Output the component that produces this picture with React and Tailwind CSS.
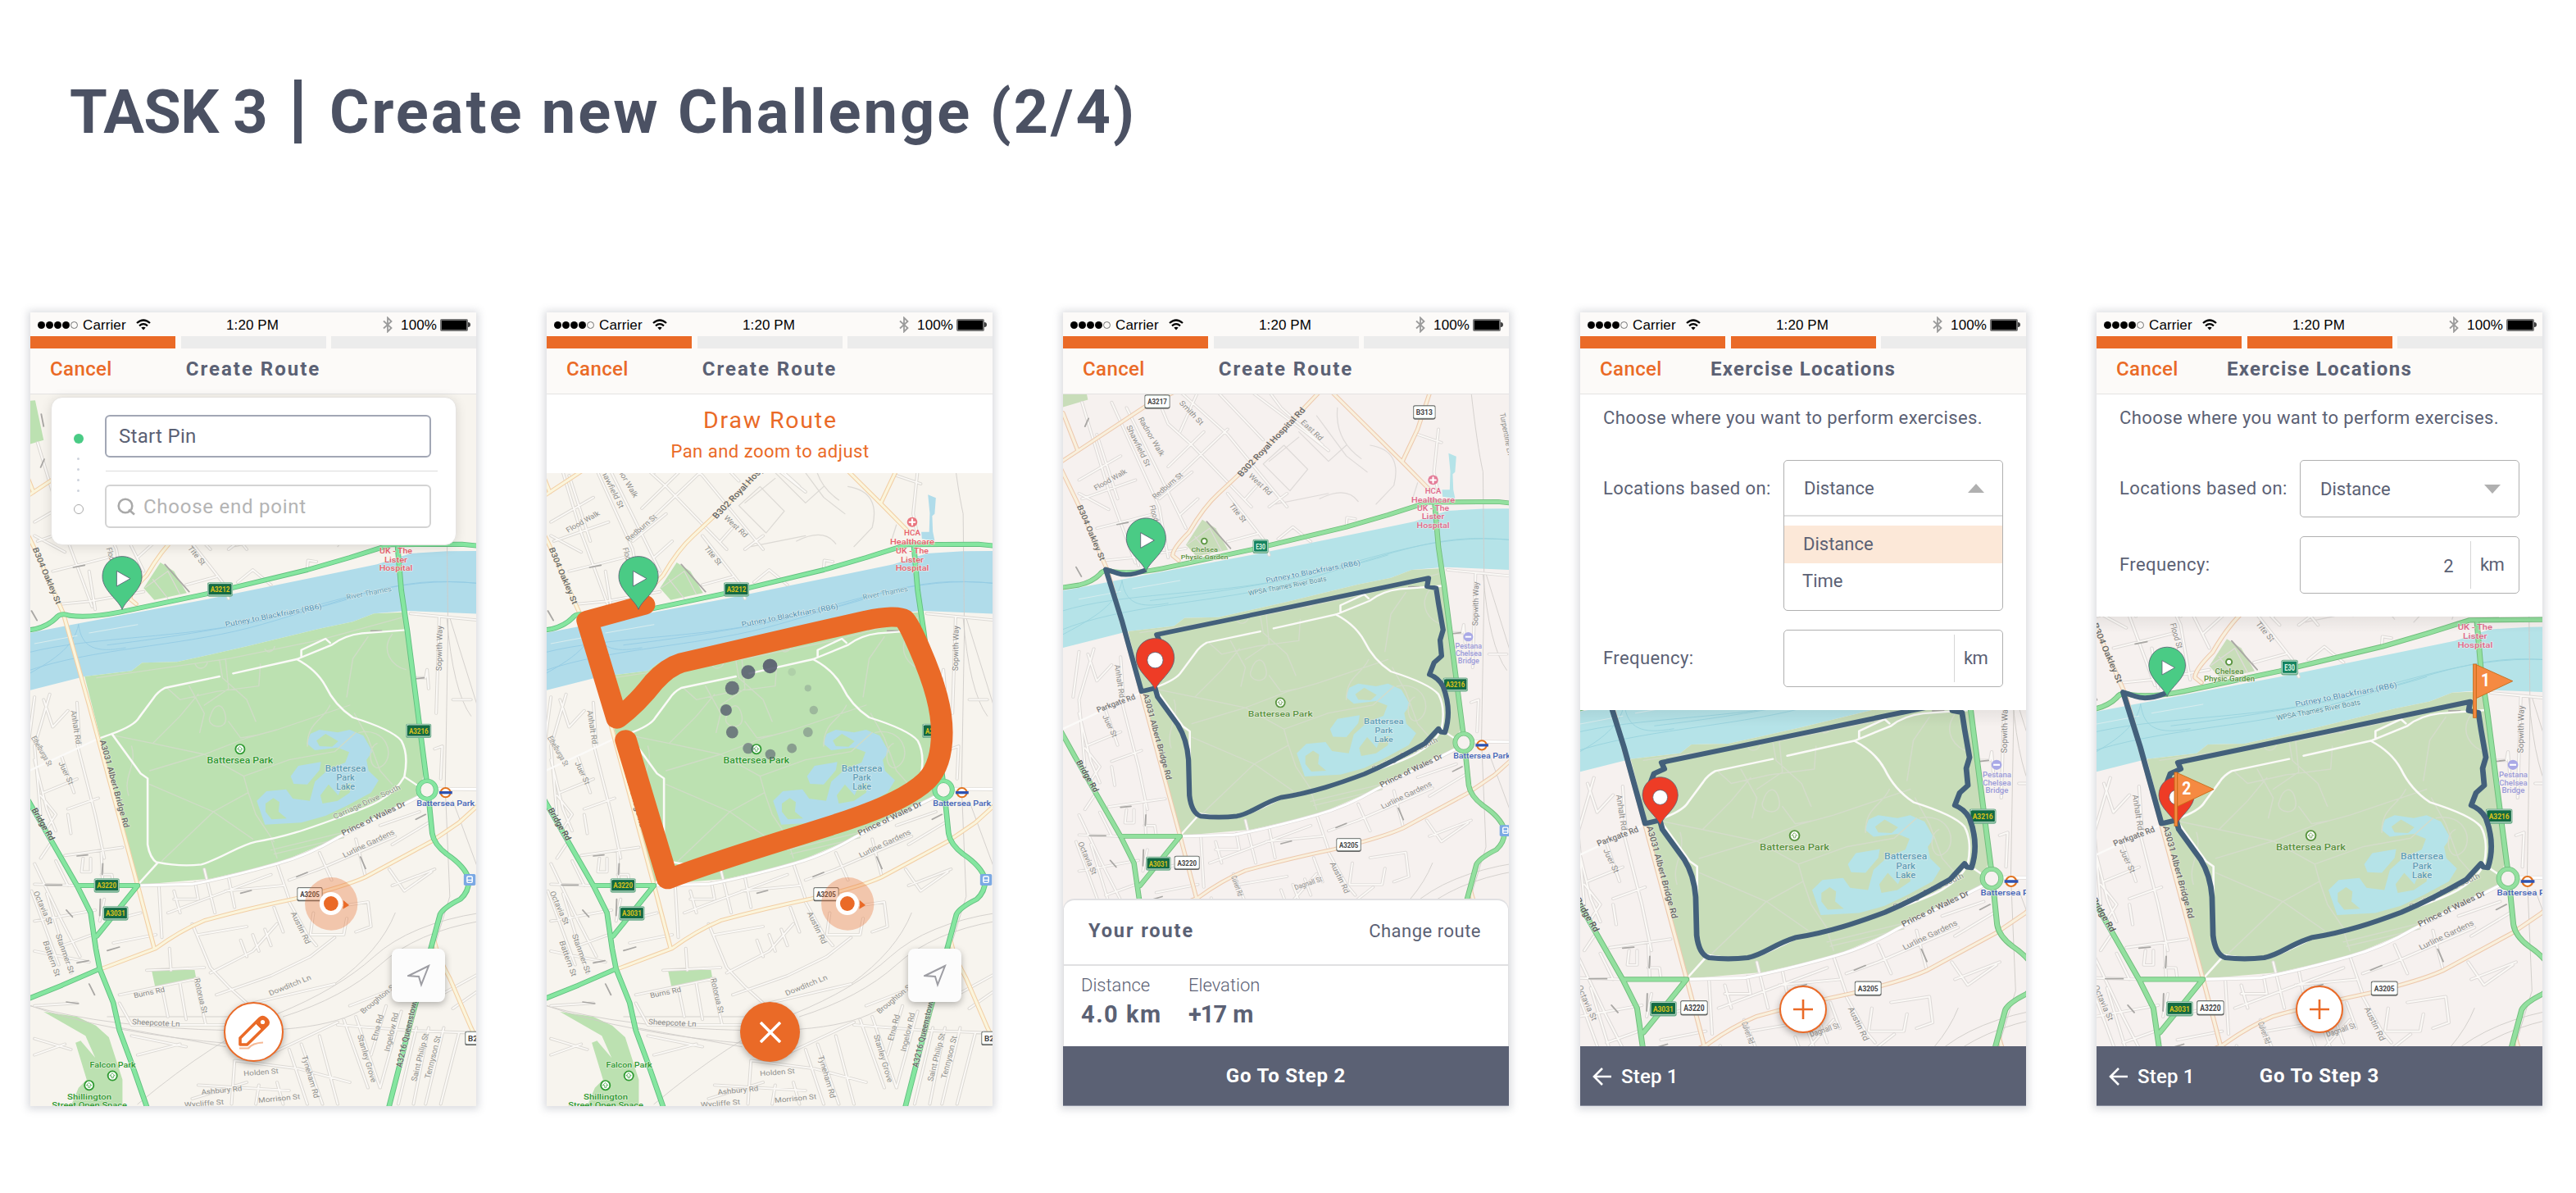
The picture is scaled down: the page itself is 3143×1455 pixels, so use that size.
import React from "react";

/* ---------- Map data ---------- */

const THEMES = {
  warm: { land: "#f7f4ee", water: "#b0dcea", wave: "#93cbe4", park: "#bce1b1", trail: "#cfdcc6", green: "#85e6a0", greenEdge: "#62bf7f", yellow: "#fbf5dc", yellowEdge: "#f2cfa6", casing: "#dcd9d4", parkText: "#2f9a32", red: "#e8606c" },
  rose: { land: "#f6f1ef", water: "#b5e3e8", wave: "#98d3dd", park: "#c8ddb9", trail: "#d4dcca", green: "#93e09f", greenEdge: "#71bd7c", yellow: "#f9f0dd", yellowEdge: "#edc9ae", casing: "#dedad8", parkText: "#5a9440", red: "#e0688a" },
};

const RIVER = "M0 1244 L46 1235 L210 1200 L640 1110 L1000 1028 L1190 985 L1300 945 L1420 937 L1530 936 L1530 1166 L1290 1155 L1180 1165 L1110 1195 L1000 1220 L760 1285 L620 1320 L530 1342 L415 1345 L380 1375 L225 1395 L0 1458 Z";
const PARK = "M225 1395 L380 1375 L415 1345 L530 1342 L620 1320 L760 1285 L1000 1220 L1110 1195 L1180 1165 L1278 1160 L1345 1750 L1325 1836 L1060 1985 L860 2080 L640 2135 L400 2158 Z";
const GARDENS = ["M475 978 L520 1010 L562 1090 L455 1115 L420 1072 Z", "M0 390 L62 385 L90 530 L0 560 Z", "M446 2469 L588 2469 L594 2506 L458 2532 Z", "M90 2622 L200 2640 L262 2672 L305 2715 L350 2870 L350 2967 L180 2967 L205 2900 L232 2870 L195 2735 L212 2728 L260 2790 L228 2710 Z"];
const LAKE = "M958 1640 L970 1605 L1000 1590 L1060 1600 L1100 1590 L1145 1612 L1175 1670 L1155 1700 L1162 1740 L1195 1775 L1170 1820 L1090 1868 L1020 1905 L940 1930 L820 1937 L793 1850 L825 1815 L890 1808 L912 1842 L968 1850 L985 1780 L1030 1735 L1085 1710 L1098 1672 L1060 1655 L985 1665 Z M905 1760 L930 1722 L1005 1708 L1000 1738 L960 1790 L915 1788 Z";
const ISLANDS = "M990 1630 L1020 1605 L1062 1632 L1042 1652 L1000 1650 Z M822 1860 L848 1840 L868 1855 L865 1890 L892 1915 L842 1918 L822 1890 Z M1003 1830 L1030 1790 L1062 1830 L1075 1795 L1103 1785 L1100 1820 L1060 1850 L1010 1860 Z";

const WAVES = "M0 1320 C200 1250 500 1260 760 1200 S1250 1020 1530 1055 M0 1390 C200 1300 480 1290 720 1230 S1200 1040 1420 1048 S1500 1070 1530 1095 M205 1205 C215 1290 260 1310 360 1290 M205 1205 C190 1290 120 1340 0 1410 M300 1280 C600 1240 900 1180 1100 1110";
const TRAILS = "M265 1400 L700 1330 L1000 1262 L1270 1180 M570 1430 L620 1530 L605 1600 M590 1350 C600 1375 625 1365 630 1345 M820 1295 C830 1315 850 1300 852 1285 M670 1335 L680 1400 L760 1480 L790 1560 M690 1330 L700 1440 L620 1500 M500 1440 L540 1480 L660 1450 L800 1430 L805 1350 M318 1610 L450 1640 L540 1540 L600 1460 M450 1640 L620 1680 L760 1620 L860 1590 L1100 1500 M620 1680 L440 1740 M620 1680 L750 1760 L765 1820 L790 1900 L850 2000 M765 1820 L650 1890 L480 2070 M650 1890 L440 1790 M650 1890 L780 1990 M750 1760 L900 1700 L1050 1670 L1120 1600 M960 1650 C960 1560 1010 1560 1035 1500 M1115 1530 L1160 1620 L1200 1740 L1240 1790 M1130 1600 C1220 1580 1250 1680 1210 1720 S1150 1660 1190 1640 M1160 1250 L1110 1330 L1090 1470 M1240 1240 C1200 1300 1240 1360 1285 1370 M640 1540 C620 1580 700 1600 690 1540 S650 1500 640 1540 M700 1560 L740 1620 L790 1610 M370 1830 C350 1760 400 1720 380 1650 M840 2030 L1100 1960 L1290 1850 M850 2045 L1080 1985 M860 2060 L840 1990 M1090 1890 L1240 1820";
const DRIVES = "M670 1395 L490 1437 Q465 1452 452 1475 L405 1545 Q390 1575 315 1605 L265 1625 L0 1762 M315 1605 L410 1750 L433 1768 L433 2010 Q440 2060 465 2078 L400 2158 M465 2075 Q540 2092 610 2083 C680 2060 730 2015 790 2000 C900 1980 980 1945 1080 1905 C1170 1870 1240 1840 1280 1762 Q1295 1680 1270 1630 Q1240 1590 1110 1545 Q1050 1500 1020 1430 Q990 1370 925 1332 M715 1384 L925 1332 L1040 1280 Q1080 1245 1140 1237 L1285 1225 M940 1325 L940 1298 L1020 1257 L1035 1272 M1280 1762 L1325 1795";
const BOULEVARD = "M1325 1836 L1060 1985 Q960 2050 860 2080 Q700 2130 580 2155 L400 2160 M1380 1806 L1530 1808";
const GREEN = "M0 1232 L60 1222 Q105 1210 130 1182 Q145 1160 175 1172 Q240 1182 340 1160 L640 1090 L960 1005 L1100 960 L1200 925 L1235 913 L1470 911 L1530 918 M1258 925 L1270 1080 L1290 1230 L1355 1790 M1360 1840 L1372 1970 Q1378 2010 1420 2045 Q1480 2090 1492 2135 Q1495 2180 1465 2210 Q1410 2240 1398 2265 L1370 2380 L1310 2620 L1228 2975 M0 1770 L46 1862 L200 2160 L245 2260 L262 2390 L275 2465 L320 2590 L340 2690 L380 2810 L432 2975 M200 2160 L400 2160 L265 2345 M275 2465 L150 2525 L0 2592";
const YELLOW = "M0 790 L70 950 L155 1165 L240 1500 L400 2158 L455 2390 M0 762 L56 721 L286 553 L420 480 M6 579 L56 721 M395 1130 L375 1112 Q375 1085 430 1025 Q480 930 530 880 L660 745 L870 500 M910 500 L1148 762 L1235 860 M1242 500 L1200 640 L1148 762 M285 2463 L460 2390 Q540 2325 620 2288 Q760 2245 920 2208 Q1080 2165 1150 2130 L1370 1998 L1460 1930 L1530 1860 M1378 2360 Q1390 2420 1430 2500 L1500 2680 L1530 2750";

const STREETS = "M70 540 L160 870 L250 1140 M120 660 L190 900 M170 540 L330 930 L360 1120 M220 560 L420 1010 M330 540 L360 620 L440 700 L640 930 M400 500 L560 660 L760 930 M500 470 L680 680 M60 830 L200 740 M70 900 L250 830 M120 1010 L230 980 L300 960 M150 1130 L240 1120 L420 1085 M360 780 L480 650 M380 830 L560 640 M330 900 L440 800 M460 500 L400 650 M560 880 L680 1050 L700 1110 M620 900 L660 850 M700 930 L760 880 M730 1050 L780 1005 L840 1060 M560 1060 L660 1030 M460 900 L400 960 M240 1010 L260 1150 M640 500 L820 650 L900 720 M700 500 L740 560 L880 700 M1270 640 L1255 800 L1268 870 M1200 660 L1280 690 M160 940 L60 880 M960 1000 L962 970 L990 975 M1300 1165 L1530 1190 M1395 1180 L1385 1530 M1310 1400 L1350 1400 L1355 1370 L1360 1440 M1440 1480 L1500 1480 M60 1470 L40 1640 M110 1460 L60 1650 L80 1900 M170 1520 L120 1580 L90 1480 M200 1490 L210 1650 M60 1700 L100 1880 L130 1960 M150 1690 L190 1820 M200 1640 L260 1900 L290 2060 M90 1820 L200 1770 M80 1830 L130 1900 L95 1960 M170 1880 L270 1840 M170 1900 L180 1970 M110 2010 L80 2060 M160 2050 L350 2020 M220 2060 L215 2110 L245 2110 L245 2060 M280 2040 L285 2160 M60 2155 L200 2160 M170 2160 L130 2070 M280 2120 L315 2120 L320 2160 M290 2210 L275 2290 M60 2080 L150 2290 L210 2420 M50 2180 L140 2450 M100 2190 L180 2480 M60 2290 L260 2250 M150 2380 L250 2340 M60 2400 L240 2440 M320 2370 L460 2340 M340 2280 L410 2260 M520 2180 L540 2260 M470 2160 L480 2350 M590 2150 L600 2210 L520 2210 M620 2100 L655 2260 M700 2130 L720 2240 M860 2080 L900 2210 M500 2260 L840 2120 M690 2180 L880 2160 M900 2140 L1000 2100 L1250 1980 M1000 2040 L1040 2140 M1120 1990 L1150 2120 M1200 1940 L1330 1890 M1240 2010 L1360 1930 M1380 2100 L1240 2160 M1230 2100 L1280 2180 L1370 2110 M1040 2240 L1160 2220 L1170 2310 L1120 2330 M980 2260 L970 2340 L1080 2340 L1090 2280 M900 2220 L960 2340 L990 2380 M850 2240 L880 2330 M580 2300 L640 2460 L700 2530 L760 2590 M640 2480 L780 2400 L860 2300 M740 2360 L760 2420 M780 2340 L800 2400 M820 2320 L840 2380 M600 2340 L760 2310 M430 2470 L620 2460 M505 2390 L510 2470 M340 2560 L600 2500 M480 2530 L500 2640 M540 2520 L560 2650 M590 2500 L625 2670 M380 2670 L740 2670 M340 2590 L380 2670 M380 2710 L560 2750 M400 2780 L540 2740 M660 2560 L840 2490 L970 2420 L1050 2350 M780 2590 L1050 2520 M1100 2600 L1240 2540 M1060 2670 L1290 2690 L1520 2700 M1080 2650 L1160 2900 M1120 2640 L1200 2900 M1220 2600 L1170 2780 M1270 2620 L1200 2900 M1320 2680 L1260 2960 M1360 2680 L1310 2960 M1410 2680 L1350 2960 M1460 2700 L1400 2960 M830 2780 L1060 2660 M900 2760 L960 2960 M940 2740 L1010 2960 M1000 2710 L1060 2960 M720 2800 L930 2830 L1100 2880 M720 2800 L710 2960 M600 2890 L900 2910 M580 2940 L760 2880 M800 2890 L790 2960 M860 2880 L880 2960 M1380 1660 L1405 1650 L1400 1770 M1400 2560 L1530 2480 M1440 2610 L1530 2540 M60 2720 L180 2760 M60 2780 L160 2740 M60 2600 L200 2590";
const LANES = "M750 700 L830 790 L770 870 L680 770 Z M800 650 L900 760 L960 700 M700 760 L800 670 M860 590 L960 740 L1030 800 M930 560 Q920 680 1010 750 M1040 700 Q1150 720 1120 850 L1060 920 M870 900 Q960 850 1000 910 M720 920 L900 880 M1200 840 L1180 910 M425 1070 L500 1010 L540 1095 M450 1040 L500 1110";
const RAILS = "M1380 500 Q1400 700 1420 800 L1424 1230 L1415 1800 L1430 2200 L1320 2600 M1420 1180 Q1440 1450 1500 1540 M1430 1180 L1520 1500 M1440 1850 L1530 2120 M1530 2260 Q1300 2300 1180 2420 T860 2630 T400 2960 M1530 2290 Q1320 2330 1200 2450 T880 2640 M1250 2260 Q1200 2400 1050 2520 M46 2600 Q300 2680 700 2690 T1200 2560 M46 2600 Q300 2700 720 2740 M340 2680 L690 2750 M300 2640 L700 2640";
const ARROWS = "M90 480 L82 435 M80 630 L92 600 M95 2158 L150 2158 M285 2080 L283 2120 M235 2048 L200 2052 M275 2270 L277 2210 M165 2250 L185 2275 M300 2398 L340 2385 M200 2443 L238 2435 M240 2520 L258 2560 M205 2592 L165 2586 M740 2188 L775 2178 M960 2112 L925 2128 M1135 2055 L1152 2098 M1350 1900 L1318 1918 M1170 1228 L1205 1228 M490 985 L570 1085 M225 988 L188 996 M50 1155 L68 1190 M1310 1404 L1345 1400";

/* Each label: text, x, y, angle, size, colour, length, weight */
const LABELS = [
  ["Battersea Park", 738, 1713, 0, 30, "park", 218, 500],
  ["Battersea", 1086, 1742, 0, 30, "#5f9fb8", 134, 500],
  ["Park", 1086, 1776, 0, 30, "#5f9fb8", 60, 500],
  ["Lake", 1086, 1809, 0, 30, "#5f9fb8", 62, 500],
  ["Battersea Park", 1416, 1868, 0, 28, "#4465b8", 192, 500],
  ["A3031  Albert Bridge Rd", 315, 1790, 76, 27, "#6b6b68", 330, 500],
  ["Prince of Wales Dr", 1182, 1922, -28, 27, "#6f6f6c", 235, 500],
  ["Carriage Drive South", 1160, 1862, -27, 26, "#8a9486", 245, 400],
  ["Lurline Gardens", 1166, 2014, -28, 26, "#8f8f8c", 190, 400],
  ["B304  Oakley St", 92, 1030, 69, 27, "#6b6b68", 220, 500],
  ["Sopwith Way", 1404, 1292, -89, 26, "#888", 165, 400],
  ["Putney to Blackfriars (RB6)", 850, 1180, -12, 26, "#4f93b5", 325, 400],
  ["Tite St", 588, 958, 53, 26, "#8f8f8c", 80, 400],
  ["Redburn St", 364, 858, -43, 26, "#8f8f8c", 130, 400],
  ["Flood Walk", 170, 836, -32, 26, "#8f8f8c", 125, 400],
  ["West Rd", 664, 852, 46, 26, "#8f8f8c", 100, 400],
  ["East Rd", 838, 650, 46, 26, "#8f8f8c", 95, 400],
  ["B302  Royal Hospital Rd", 715, 695, -49, 30, "#666", 330, 500],
  ["Shawfield St", 252, 706, 66, 26, "#8f8f8c", 165, 400],
  ["Radnor Walk", 296, 672, 62, 26, "#8f8f8c", 160, 400],
  ["Smith St", 432, 585, 49, 26, "#8f8f8c", 110, 400],
  ["Flood St", 308, 970, 75, 26, "#8f8f8c", 90, 400],
  ["Turpentine Ln", 1490, 660, 80, 26, "#8f8f8c", 160, 400],
  ["HCA", 1252, 880, 0, 26, "red", 54, 500],
  ["Healthcare", 1252, 913, 0, 26, "red", 146, 500],
  ["UK - The", 1252, 945, 0, 26, "red", 108, 500],
  ["Lister", 1252, 977, 0, 26, "red", 76, 500],
  ["Hospital", 1252, 1009, 0, 26, "red", 110, 500],
  ["Bridge Rd", 80, 1940, 62, 28, "#555", 130, 500],
  ["Anhalt Rd", 188, 1582, 82, 26, "#8f8f8c", 125, 400],
  ["Juer St", 156, 1752, 67, 26, "#8f8f8c", 88, 400],
  ["Austin Rd", 930, 2318, 66, 26, "#8f8f8c", 125, 400],
  ["Octavia St", 80, 2245, 68, 26, "#8f8f8c", 130, 400],
];
const WARM_LABELS = [
  ["Ethelburga St", 76, 1672, 62, 26, "#8f8f8c", 120, 400],
  ["River Thames", 1165, 1098, -12, 26, "#5f9fb8", 152, 400],
  ["Battern St", 108, 2430, 72, 26, "#8f8f8c", 135, 400],
  ["Stanmer St", 152, 2412, 72, 26, "#8f8f8c", 150, 400],
  ["Burns Rd", 440, 2560, -13, 26, "#888", 104, 400],
  ["Rotorua St", 600, 2565, 78, 26, "#8f8f8c", 130, 400],
  ["Dowditch Ln", 906, 2533, -24, 26, "#8f8f8c", 150, 400],
  ["Broughton St", 1200, 2580, -42, 26, "#8f8f8c", 150, 400],
  ["Sheepcote Ln", 460, 2672, 3, 28, "#888", 158, 400],
  ["Holden St", 808, 2852, -5, 26, "#8f8f8c", 115, 400],
  ["Ashbury Rd", 678, 2918, -6, 26, "#8f8f8c", 135, 400],
  ["Morrison St", 868, 2948, -6, 26, "#8f8f8c", 138, 400],
  ["Wycliffe St", 620, 2966, -5, 26, "#8f8f8c", 130, 400],
  ["Tyneham Rd", 962, 2862, 75, 26, "#8f8f8c", 160, 400],
  ["Stanley Grove", 1148, 2795, 75, 26, "#8f8f8c", 180, 400],
  ["Etna Rd", 1200, 2682, -76, 26, "#8f8f8c", 98, 400],
  ["Ingelow Rd", 1246, 2698, -78, 26, "#8f8f8c", 145, 400],
  ["A3216  Queenstown Rd", 1302, 2680, -78, 28, "#666", 300, 500],
  ["Saint Philip St", 1340, 2790, -77, 26, "#8f8f8c", 180, 400],
  ["Tennyson St", 1382, 2790, -77, 26, "#8f8f8c", 160, 400],
  ["Falcon Park", 318, 2826, 0, 29, "park", 152, 500],
  ["Shillington", 241, 2943, 0, 29, "park", 146, 500],
  ["Street Open Space", 241, 2974, 0, 29, "park", 248, 500],
];
const ROSE_LABELS = [
  ["Chelsea", 513, 940, 0, 24, "park", 88, 500],
  ["Physic Garden", 513, 966, 0, 24, "park", 156, 500],
  ["WPSA Thames River Boats", 788, 1072, -12, 25, "#4f93a5", 262, 400],
  ["Pestana", 1384, 1292, 0, 25, "#9a9ad8", 88, 500],
  ["Chelsea", 1384, 1319, 0, 25, "#9a9ad8", 86, 500],
  ["Bridge", 1384, 1346, 0, 25, "#9a9ad8", 70, 500],
  ["Parkgate Rd", 224, 1502, -22, 28, "#777", 135, 500],
  ["Dagnall St", 858, 2160, -20, 26, "#8f8f8c", 95, 400],
  ["Culvert Rd", 612, 2164, 72, 26, "#8f8f8c", 76, 400],
];

const WARM_BADGES = [["A3212", 672, 1077, "green"], ["A3220", 298, 2160, "green"]];
const ROSE_BADGES = [["E30", 698, 919, "teal"], ["A3220", 455, 2077, "white"], ["A3217", 357, 390, "white"], ["B313", 1238, 429, "white"]];
const BADGES = [["A3216", 1327, 1594, "green"], ["A3031", 327, 2262, "green"], ["A3205", 968, 2192, "white"]];

const ROUTE = "M320 1005 Q262 1032 225 1017 L187 1003 L240 1190 L305 1450 L350 1438 L358 1470 L425 1572 Q455 1625 460 1700 L463 1830 Q470 1895 500 1906 Q560 1914 620 1906 C670 1895 700 1860 765 1838 C870 1820 960 1785 1040 1752 Q1130 1710 1240 1640 L1285 1586 L1292 1598 L1306 1600 Q1330 1520 1300 1432 Q1285 1400 1255 1388 L1270 1345 L1295 1320 L1290 1262 L1300 1225 L1285 1130 L1277 1072 L1247 1066 L1252 1035 L800 1140 L355 1242 L364 1264 L332 1280 L322 1310";

/* ---------- Map pieces ---------- */

const within = (list, [top, bottom]) => list.filter((item) => item[2] >= top && item[2] <= bottom);

function MapLabel({ data, theme }) {
  const [text, x, y, angle, size, color, length, weight] = data;
  const fill = color === "park" ? theme.parkText : color === "red" ? theme.red : color;
  return (
    <text x={x} y={y} transform={`rotate(${angle} ${x} ${y})`} fontSize={size} fontWeight={weight} fill={fill} textAnchor="middle" textLength={length} lengthAdjust="spacingAndGlyphs" stroke={theme.land} strokeOpacity="0.6" strokeWidth="4" paintOrder="stroke">
      {text}
    </text>
  );
}

function Badge({ data }) {
  const [text, x, y, kind] = data;
  const w = text.length > 4 ? 78 : text.length > 3 ? 68 : 46;
  const fill = kind === "white" ? "#fff" : kind === "teal" ? "#15835f" : "#136a43";
  const ink = kind === "white" ? "#444" : kind === "teal" ? "#d8f5e2" : "#d9c21c";
  return (
    <g>
      <rect x={x - w / 2 - 3} y={y - 26} width={w + 6} height="52" rx="7" fill={kind === "white" ? "#666" : "#6fae8c"} />
      <rect x={x - w / 2} y={y - 22} width={w} height="42" rx="4" fill={fill} stroke="#e6f3ea" strokeWidth="2" />
      <text x={x} y={y + 10} fontSize="28" fontWeight="700" fill={ink} textAnchor="middle" textLength={w - 14} lengthAdjust="spacingAndGlyphs">{text}</text>
    </g>
  );
}

function ParkMark({ x, y, color }) {
  return (
    <g>
      <ellipse cx={x} cy={y} rx="15" ry="17" fill="#fff" stroke={color} strokeWidth="5" />
      <path d={`M${x} ${y - 9} l8 9 h-5 v8 h-6 v-8 h-5 z`} fill="#fff" stroke={color} strokeWidth="2" />
    </g>
  );
}

function BaseMap({ theme, warm, range }) {
  return (
    <g fill="none" strokeLinejoin="round" strokeLinecap="round">
      <path d={RIVER} fill={theme.water} />
      <path d={PARK} fill={theme.park} />
      {GARDENS.map((d) => <path key={d} d={d} fill={theme.park} />)}
      <path d="M1304 730 L1330 742 L1326 800 L1318 808 L1320 865 L1326 898 L1284 892 L1282 866 L1308 866 L1310 798 Z" fill={theme.water} />
      <path d={LAKE} fill={theme.water} />
      <path d={ISLANDS} fill={theme.park} />
      <path d={WAVES} stroke={theme.wave} strokeWidth="2.5" />
      <path d="M240 1236 L400 1205 M60 1275 L200 1246" stroke="#d8ecee" strokeWidth="3" />
      <path d={TRAILS} stroke={theme.trail} strokeWidth="4" />
      <path d={LANES} stroke={theme.casing} strokeWidth="3.5" />
      <path d={RAILS} stroke="#cfccc8" strokeWidth="2.5" />
      <path d={STREETS} stroke={theme.casing} strokeWidth="11" />
      <path d={STREETS} stroke="#fbf9f6" strokeWidth="5.5" />
      <path d={ARROWS} stroke="#a9a7a4" strokeWidth="5" />
      <path d={DRIVES} stroke="#fbfaf8" strokeWidth="7" />
      <path d={BOULEVARD} stroke={theme.casing} strokeWidth="13" />
      <path d={BOULEVARD} stroke="#fff" strokeWidth="9" />
      <path d={YELLOW} stroke={theme.yellowEdge} strokeWidth="15" />
      <path d={YELLOW} stroke={theme.yellow} strokeWidth="9" />
      <path d={GREEN} stroke={theme.greenEdge} strokeWidth="18" />
      <path d={GREEN} stroke={theme.green} strokeWidth="13" />
      <ellipse cx="1355" cy="1810" rx="29" ry="33" fill={theme.land} stroke={theme.greenEdge} strokeWidth="16" />
      <ellipse cx="1355" cy="1810" rx="29" ry="33" stroke={theme.green} strokeWidth="12" />
      <ellipse cx="1416" cy="1820" rx="16" ry="17" fill="#fff" stroke="#e2731f" strokeWidth="6" />
      <rect x="1395" y="1815" width="43" height="10" fill="#2f52b0" />
      <rect x="1476" y="2118" width="39" height="42" rx="5" fill="#7ba9e4" />
      <rect x="1487" y="2127" width="17" height="22" rx="3" stroke="#fff" strokeWidth="4" />
      <path d="M1488 2140 H1503" stroke="#fff" strokeWidth="4" />
      <ellipse cx="1252" cy="830" rx="17" ry="18" fill={theme.red} opacity="0.85" />
      <path d="M1252 820 V840 M1243 830 H1261" stroke="#fff" strokeWidth="6" />
      <ParkMark x={738} y={1661} color={theme.parkText} />
      {warm && <ParkMark x={317} y={2856} color={theme.parkText} />}
      {warm && <ParkMark x={240} y={2891} color={theme.parkText} />}
      {within(warm ? [...LABELS, ...WARM_LABELS] : LABELS, range).map((l) => <MapLabel key={`${l[0]}-${l[2]}`} data={l} theme={theme} />)}
      {(warm ? [...BADGES, ...WARM_BADGES] : BADGES).map((b) => <Badge key={b[0]} data={b} />)}
      {warm && <Badge data={["B2", 1506, 2719, "white"]} />}
    </g>
  );
}

function WarmMap({ viewBox, range, className, children }) {
  return (
    <svg viewBox={viewBox} preserveAspectRatio="none" fontFamily="Roboto, sans-serif" className={className}>
      <rect x="0" y="0" width="1600" height="3000" fill={THEMES.warm.land} />
      <BaseMap theme={THEMES.warm} warm range={range} />
      {children}
    </svg>
  );
}

function RoseMap({ viewBox, range, zoomed, className, children }) {
  const theme = THEMES.rose;
  const roseRange = range.map((y) => y * 0.98 - 137);
  return (
    <svg viewBox={viewBox} preserveAspectRatio="none" fontFamily="Roboto, sans-serif" className={className}>
      <rect x="0" y="0" width="1600" height="3000" fill={theme.land} />
      <g transform={zoomed ? "matrix(1.0755 0 0 1.0755 -64.6 374)" : undefined}>
        <g transform="matrix(0.98 0 0 0.98 40 -137)">
          <BaseMap theme={theme} range={range} />
        </g>
        <ellipse cx="512" cy="900" rx="9" ry="10" fill="#fff" stroke={theme.parkText} strokeWidth="5" />
        <ellipse cx="1383" cy="1250" rx="16" ry="17" fill="#a9a9e6" />
        <path d="M1373 1250 H1393" stroke="#fff" strokeWidth="6" />
        {within(ROSE_LABELS, roseRange).map((l) => <MapLabel key={`${l[0]}-${l[2]}`} data={l} theme={theme} />)}
        {within(ROSE_BADGES, roseRange).map((b) => <Badge key={b[0]} data={b} />)}
        <path d={ROUTE} fill="none" stroke="#43607b" strokeWidth="17" strokeLinejoin="round" />
      </g>
      {children}
    </svg>
  );
}

function Pin({ x, y, scale = 1, end }) {
  return (
    <g transform={`translate(${x} ${y}) scale(${scale})`} stroke="#5b6174" strokeWidth="2.5" strokeLinejoin="round">
      <path d="M0 0 C-12 -36 -65 -70 -65 -120 C-65 -162 -38 -194 0 -194 C38 -194 65 -162 65 -120 C65 -70 12 -36 0 0 Z" fill={end ? "#ee3c26" : "#4acb85"} />
      {end ? <ellipse cx="0" cy="-112" rx="27" ry="30" fill="#fff" /> : <path d="M-18 -141 L27 -113 L-18 -85 Z" fill="#fff" />}
    </g>
  );
}

function Flag({ x, y, number }) {
  return (
    <g transform={`translate(${x} ${y})`}>
      <rect x="-5" y="0" width="10" height="196" fill="#f58a42" stroke="#c66a16" strokeWidth="2.5" />
      <path d="M5 2 L125 62 L5 125 Z" fill="#f58a42" stroke="#c66a16" strokeWidth="2.5" />
      <text x="35" y="82" fontSize="64" fontWeight="700" fill="#fff" textAnchor="middle" textLength="30" lengthAdjust="spacingAndGlyphs">{number}</text>
    </g>
  );
}

function CurrentLocation() {
  return (
    <g>
      <ellipse cx="1039" cy="2227" rx="87" ry="97" fill="#ea6a27" opacity="0.33" />
      <ellipse cx="1038" cy="2226" rx="38" ry="42" fill="#fff" />
      <ellipse cx="1038" cy="2226" rx="24" ry="27" fill="#ea6a27" />
      <path d="M1078 2213 L1098 2232 L1077 2246 Q1082 2230 1078 2213 Z" fill="#ea6a27" />
    </g>
  );
}

const SPINNER = [
  [783, 1357, 24, 0.9], [711, 1379, 23, 0.85], [658, 1438, 23, 0.8], [638, 1518, 19, 0.8], [658, 1599, 20, 0.75], [711, 1658, 18, 0.6],
  [784, 1680, 17, 0.6], [855, 1658, 16, 0.5], [908, 1599, 16, 0.4], [927, 1518, 14, 0.3], [908, 1438, 11, 0.25], [855, 1379, 13, 0.12],
];

/* ---------- Phone chrome ---------- */

function StatusBar() {
  return (
    <div className="flex h-[29px] shrink-0 items-center pl-[9px] pr-[7px] pt-px font-['Liberation_Sans',sans-serif] text-[17px] leading-none text-black">
      <div className="flex w-[220px] items-center">
        <div className="flex gap-px">
          {[0, 1, 2, 3].map((i) => <span key={i} className="size-[9px] rounded-full bg-black" />)}
          <span className="size-[9px] rounded-full border border-neutral-500" />
        </div>
        <span className="ml-[6px] tracking-[0.1px]">Carrier</span>
        <svg viewBox="0 0 18 14" className="ml-[12px] h-[14px] w-[18px]" fill="none" stroke="#000" strokeWidth="2.3">
          <path d="M1 5 Q9 -2 17 5" />
          <path d="M4 8.3 Q9 4 14 8.3" />
          <path d="M9 13.5 L6.3 10.6 Q9 8.8 11.7 10.6 Z" fill="#000" stroke="none" />
        </svg>
      </div>
      <span className="w-[90px] pl-[10px] whitespace-nowrap tracking-[0.1px]">1:20 PM</span>
      <div className="ml-auto flex items-center">
        <svg viewBox="0 0 12 20" className="mr-[10px] h-[20px] w-[12px]" fill="none" stroke="#9b9b9b" strokeWidth="1.8">
          <path d="M1 5.5 L10.5 14 L6 18.5 V1.5 L10.5 6 L1 14.5" />
        </svg>
        <span className="tracking-[0.1px]">100%</span>
        <span className="ml-[4px] h-[15px] w-[34px] rounded-[2px] border-2 border-neutral-500 bg-black" />
        <span className="h-[6px] w-[3px] rounded-r bg-neutral-700" />
      </div>
    </div>
  );
}

function Phone({ title, titleClass, steps = 1, className = "", children }) {
  return (
    <section className={`flex h-[968px] w-[544px] shrink-0 flex-col overflow-hidden bg-white shadow-[0_1px_9px_3px_rgba(91,97,116,0.22)] ${className}`}>
      <header className="shrink-0 border-b border-[#e4e3e2] bg-[#fcfaf8]">
        <StatusBar />
        <div className="flex h-[15px] justify-between">
          {[1, 2, 3].map((i) => <span key={i} className={`w-[177px] ${i <= steps ? "bg-[#ea6a27]" : "bg-[#ececec]"}`} />)}
        </div>
        <div className="grid h-[55px] grid-cols-[120px_1fr_120px] items-center pb-[6px] leading-none">
          <span className="pl-[24px] text-[24px] font-medium tracking-[0.4px] text-[#ea6a27]">Cancel</span>
          <h2 className={`text-center text-[24px] font-bold whitespace-nowrap text-[#5b6174] ${titleClass}`}>{title}</h2>
        </div>
      </header>
      {children}
    </section>
  );
}

function LocateButton() {
  return (
    <button className="absolute top-[676px] left-[441px] flex size-[65px] items-center justify-center rounded-[8px] bg-[#fcfcfc] shadow-[0_3px_8px_rgba(0,0,0,0.28)]">
      <svg viewBox="0 0 28 28" className="size-[28px]" fill="none" stroke="#9d9da3" strokeWidth="2" strokeLinejoin="miter">
        <path d="M26 2 L1.5 14 L14 15 L17 25 Z" />
      </svg>
    </button>
  );
}

function SearchCard() {
  return (
    <div className="absolute top-[3px] left-[25px] flex h-[181px] w-[495px] rounded-[14px] border border-[#e6e4e1] bg-white shadow-[0_2px_14px_rgba(0,0,0,0.12)]">
      <div className="flex w-[65px] flex-col items-center pt-[44px]">
        <span className="size-[12px] rounded-full bg-[#4acb85]" />
        <div className="mt-[17px] flex flex-col gap-[10px]">
          {[0, 1, 2, 3].map((i) => <span key={i} className="size-[3px] rounded-full bg-[#cdd2dc]" />)}
        </div>
        <span className="mt-[15px] size-[12px] rounded-full border border-[#aaa]" />
      </div>
      <div className="flex flex-col pt-[21px]">
        <div className="flex h-[52px] w-[398px] items-center rounded-[6px] border-2 border-[#a2a7b5] pl-[15px] text-[24px] leading-none tracking-[0.3px] text-[#5b6174]">Start Pin</div>
        <div className="mt-[16px] ml-px h-px w-[405px] bg-[#dcdcdc]" />
        <div className="mt-[16px] flex h-[53px] w-[398px] items-center rounded-[6px] border-2 border-[#d3d3d3] pl-[13px] text-[24px] leading-none tracking-[0.75px] text-[#b4b4b4]">
          <svg viewBox="0 0 22 22" className="mr-[10px] size-[22px]" fill="none" stroke="#a9a9a9" strokeWidth="2.6">
            <circle cx="10" cy="10" r="8.3" />
            <path d="M14 14.5 L21 20.5" />
          </svg>
          Choose end point
        </div>
      </div>
    </div>
  );
}

function AddButton({ className }) {
  return (
    <button className={`absolute left-[243px] flex size-[58px] items-center justify-center rounded-full border-2 border-[#ea6a27] bg-white shadow-[0_3px_8px_rgba(0,0,0,0.3)] ${className}`}>
      <svg viewBox="0 0 24 24" className="size-[24px]" stroke="#ea6a27" strokeWidth="2.6">
        <path d="M12 0 V24 M0 12 H24" />
      </svg>
    </button>
  );
}

function StepFooter({ next }) {
  return (
    <footer className="grid h-[73px] shrink-0 grid-cols-[150px_1fr_150px] items-center border-b border-[#8a8fa0] bg-[#5b6174] text-[24px] leading-none text-white">
      <div className="flex items-center pl-[15px] pt-px font-medium tracking-[0.2px] whitespace-nowrap">
        <svg viewBox="0 0 24 22" className="mr-[11px] h-[22px] w-[24px]" fill="none" stroke="#fff" strokeWidth="2.6">
          <path d="M12 1 L2 11 L12 21 M2 11 H23" />
        </svg>
        Step 1
      </div>
      <span className="text-center font-bold tracking-[0.8px]">{next}</span>
    </footer>
  );
}

function Triangle({ up }) {
  return (
    <svg viewBox="0 0 20 11" className="h-[11px] w-[20px]" fill="#b0b0b0">
      <path d={up ? "M10 0 L20 11 H0 Z" : "M0 0 H20 L10 11 Z"} />
    </svg>
  );
}

function ExerciseForm({ open, value, className }) {
  return (
    <div className={`shrink-0 px-[28px] pt-[18px] text-[22px] leading-none tracking-[0.4px] text-[#5b6174] ${className}`}>
      <p className="h-[62px] whitespace-nowrap">Choose where you want to perform exercises.</p>
      <div className="flex justify-between">
        <span className="pt-[24px]">Locations based on:</span>
        <div className={`w-[268px] overflow-hidden rounded-[5px] border-[1.5px] border-[#b0b0b0] ${open ? "h-[184px]" : "h-[70px]"}`}>
          <div className={`flex h-[68px] items-center justify-between pt-px pr-[22px] pl-[24px] tracking-[0px] ${open ? "border-b-2 border-[#dedede]" : ""}`}>
            Distance
            <Triangle up={open} />
          </div>
          {open && (
            <ul className="pt-[11px] tracking-[0px]">
              <li className="flex h-[46px] items-center bg-[#fce8d8] pl-[23px]">Distance</li>
              <li className="flex h-[44px] items-center pl-[22px]">Time</li>
            </ul>
          )}
        </div>
      </div>
      <div className="mt-[23px] flex justify-between">
        <span className="pt-[24px]">Frequency:</span>
        <div className="flex h-[70px] w-[268px] items-center rounded-[5px] border-[1.5px] border-[#b0b0b0]">
          <span className="flex-1 pt-[4px] pr-[20px] text-right">{value}</span>
          <span className="flex h-[58px] w-[59px] items-center justify-center border-l border-[#d6d6d6] pr-[7px] tracking-[-0.8px]">km</span>
        </div>
      </div>
    </div>
  );
}

/* ---------- Page ---------- */

export default function App() {
  return (
    <main className="h-[1455px] w-[3143px] overflow-hidden bg-white font-['Roboto',sans-serif]">
      <h1 className="flex h-[381px] items-start pt-[97px] pl-[85px] text-[74px] leading-[80px] font-bold whitespace-nowrap text-[#4b5163]">
        <span className="w-[274px] tracking-[-0.7px]">TASK 3</span>
        <span className="h-[78px] w-[9px] bg-[#4b5163]" />
        <span className="ml-[34px] tracking-[3px]">Create new Challenge (2/4)</span>
      </h1>

      <div className="flex gap-[86px] pl-[37px]">
        <Phone title="Create Route" titleClass="tracking-[2px]">
          <div className="relative">
            <WarmMap viewBox="46 363 1471 2604" range={[930, 3000]} className="h-[868px] w-full">
              <CurrentLocation />
              <Pin x={349} y={1150} />
            </WarmMap>
            <SearchCard />
            <LocateButton />
            <button className="absolute top-[741px] left-[236px] flex size-[73px] items-center justify-center rounded-full border-2 border-[#ea6a27] bg-white shadow-[0_3px_8px_rgba(0,0,0,0.3)]">
              <svg viewBox="0 0 38 42" className="h-[42px] w-[38px]" fill="none" stroke="#ea6a27" strokeWidth="3.6" strokeLinejoin="round">
                <path d="M2 36 V28 L26 4 Q29.5 1 33 4 L35 6 Q37.5 9.5 34.5 12.5 L10.5 36 Z" fill="#fff" />
                <path d="M20.5 9.5 L29 18 L35 12.5 Q37.5 9.5 35 6 L33 4 Q29.5 1 26 4 Z" fill="#ea6a27" strokeWidth="1" />
                <circle cx="29.5" cy="8.5" r="2.6" fill="#fff" stroke="none" />
                <path d="M1 40.5 H12 Q17 34 30 33.5" stroke="#f6b995" strokeWidth="2.2" />
              </svg>
            </button>
          </div>
        </Phone>

        <Phone title="Create Route" titleClass="tracking-[2px]">
          <div className="flex h-[96px] shrink-0 flex-col items-center bg-white pt-[16px] text-[#ea6a27]">
            <p className="pl-[2px] text-[28.5px] leading-[32px] tracking-[1.8px]">Draw Route</p>
            <p className="mt-[9px] pl-px text-[22px] leading-[26px] tracking-[0.5px]">Pan and zoom to adjust</p>
          </div>
          <div className="relative -mt-[96px] pt-[96px]">
            <WarmMap viewBox="46 651 1471 2316" range={[672, 3000]} className="h-[772px] w-full">
              <path d="M368 1133 L180 1190 L278 1550 Q340 1500 400 1415 Q445 1360 490 1345 L900 1240 L1100 1190 Q1200 1168 1225 1185 Q1240 1200 1275 1290 C1330 1430 1350 1520 1350 1600 Q1350 1720 1300 1775 Q1230 1850 1040 1920 C850 1990 650 2050 445 2137 L307 1627" fill="none" stroke="#ea6a27" strokeWidth="72" strokeLinejoin="round" strokeLinecap="round" />
              {SPINNER.map(([x, y, r, o]) => <ellipse key={`${x}-${y}`} cx={x} cy={y} rx={r} ry={r * 1.11} fill="#555b6e" opacity={o} />)}
              <CurrentLocation />
              <Pin x={349} y={1150} />
            </WarmMap>
            <LocateButton />
            <button className="absolute top-[741px] left-[236px] flex size-[73px] items-center justify-center rounded-full bg-[#ea6a27] shadow-[0_3px_8px_rgba(0,0,0,0.3)]">
              <svg viewBox="0 0 26 26" className="size-[26px]" stroke="#fff" strokeWidth="3.6">
                <path d="M1 1 L25 25 M25 1 L1 25" />
              </svg>
            </button>
          </div>
        </Phone>

        <Phone title="Create Route" titleClass="tracking-[2px]">
          <RoseMap viewBox="46 363 1471 1905" range={[530, 2380]} className="h-[635px] w-full shrink-0">
            <Pin x={320} y={1010} />
            <Pin x={350} y={1444} scale={0.97} end />
          </RoseMap>
          <div className="relative -mt-[20px] h-[180px] shrink-0 rounded-t-[14px] border-x border-t-2 border-[#e0e0e2] bg-white leading-none text-[#5b6174]">
            <div className="flex h-[80px] items-center justify-between border-b-2 border-[#e0e0e2] pr-[33px] pb-[2px] pl-[30px]">
              <span className="text-[23.5px] font-bold tracking-[1.9px]">Your route</span>
              <span className="text-[22px] tracking-[0.5px]">Change route</span>
            </div>
            <div className="flex pt-[13px] pl-[21px]">
              <div className="w-[131px]">
                <p className="text-[22px] font-light">Distance</p>
                <p className="mt-[10px] text-[29px] font-bold tracking-[1.5px]">4.0 km</p>
              </div>
              <div>
                <p className="text-[22px] font-light">Elevation</p>
                <p className="mt-[10px] text-[29px] font-bold tracking-[-1px] [word-spacing:2px]">+17 m</p>
              </div>
            </div>
          </div>
          <footer className="flex h-[73px] items-center justify-center border-b border-[#8a8fa0] bg-[#5b6174] text-[24px] font-bold tracking-[0.8px] text-white">Go To Step 2</footer>
        </Phone>

        <Phone title="Exercise Locations" titleClass="tracking-[1.3px]" steps={2} className="ml-px">
          <ExerciseForm open className="h-[385px]" />
          <div className="relative">
            <RoseMap zoomed viewBox="49 1518 1471 1230" range={[1245, 2385]} className="h-[410px] w-full">
              <Pin x={313} y={1938} scale={0.9} end />
            </RoseMap>
            <div className="absolute inset-x-0 top-0 h-[20px] bg-gradient-to-b from-black/6 to-transparent" />
            <AddButton className="top-[336px]" />
          </div>
          <StepFooter />
        </Phone>

        <Phone title="Exercise Locations" titleClass="tracking-[1.3px]" steps={2}>
          <ExerciseForm value="2" className="h-[271px]" />
          <div className="relative">
            <RoseMap zoomed viewBox="49 1176 1471 1572" range={[930, 2385]} className="h-[524px] w-full">
              <Pin x={282} y={1468} scale={0.93} />
              <Pin x={313} y={1938} scale={0.9} end />
              <Flag x={1297} y={1350} number="1" />
              <Flag x={311} y={1746} number="2" />
            </RoseMap>
            <div className="absolute inset-x-0 top-0 h-[20px] bg-gradient-to-b from-black/6 to-transparent" />
            <AddButton className="top-[450px]" />
          </div>
          <StepFooter next="Go To Step 3" />
        </Phone>
      </div>
    </main>
  );
}
